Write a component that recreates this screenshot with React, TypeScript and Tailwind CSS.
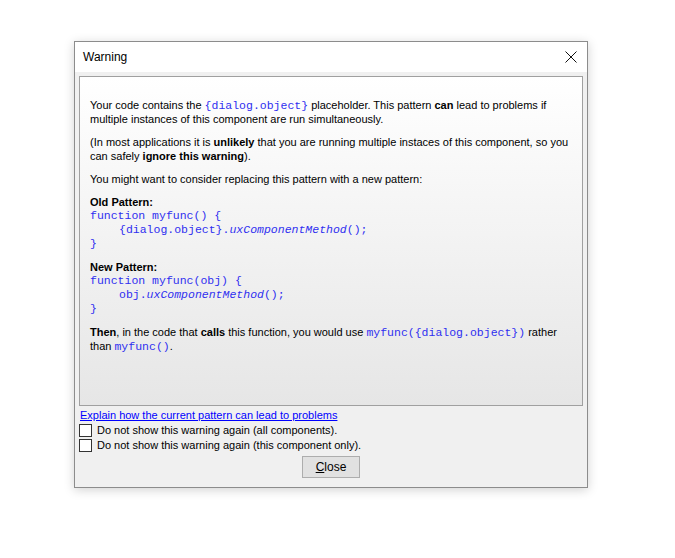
import React from "react";

const code = "text-[#2f2ff0] font-['Liberation_Mono',monospace] text-[11.5px]";
const icode = code + " leading-[10px]";

function Check({ label }: { label: string }) {
  return (
    <div className="flex items-center h-[15px]">
      <div className="w-[13px] h-[13px] border border-[#333] bg-white shrink-0" />
      <span className="ml-[5px] leading-[15px]">{label}</span>
    </div>
  );
}

export default function App() {
  return (
    <div className="w-[675px] h-[558px] bg-white pt-[41px] pl-[74px] font-['Liberation_Sans',Arial,sans-serif]">
      <div className="w-[514px] h-[447px] border border-[#8c8c8c] bg-[#f0f0f0] flex flex-col shadow-[0_2px_10px_rgba(0,0,0,0.18)]">
        <div className="h-[30px] bg-white flex items-center justify-between pl-[8px] pr-[10px] shrink-0">
          <span className="text-[12px] text-black">Warning</span>
          <svg width="12" height="12" viewBox="0 0 12 12">
            <path d="M0.5 0.5 L11.5 11.5 M11.5 0.5 L0.5 11.5" stroke="#111" strokeWidth="1" fill="none" />
          </svg>
        </div>
        <div className="flex-1 flex flex-col px-[4px] pt-[4px] text-[11px] text-black">
          <div className="h-[330px] border border-[#a0a0a0] bg-gradient-to-b from-white to-[#e6e6e6] pl-[10px] pt-[21px] leading-[14px] flex flex-col gap-[9px]">
            <p>
              Your code contains the <span className={icode}>{"{dialog.object}"}</span> placeholder. This pattern <b>can</b> lead to problems if
              <br />
              multiple instances of this component are run simultaneously.
            </p>
            <p>
              (In most applications it is <b>unlikely</b> that you are running multiple instaces of this component, so you
              <br />
              can safely <b>ignore this warning</b>).
            </p>
            <p>You might want to consider replacing this pattern with a new pattern:</p>
            <div>
              <b>Old Pattern:</b>
              <div className={code}>function myfunc() {"{"}</div>
              <div className={code + " pl-[29px]"}>
                {"{dialog.object}."}
                <i>uxComponentMethod</i>();
              </div>
              <div className={code}>{"}"}</div>
            </div>
            <div>
              <b>New Pattern:</b>
              <div className={code}>function myfunc(obj) {"{"}</div>
              <div className={code + " pl-[29px]"}>
                obj.<i>uxComponentMethod</i>();
              </div>
              <div className={code}>{"}"}</div>
            </div>
            <p>
              <b>Then</b>, in the code that <b>calls</b> this function, you would use{" "}
              <span className={icode}>{"myfunc({dialog.object})"}</span> rather
              <br />
              than <span className={icode}>myfunc()</span>.
            </p>
          </div>
          <a className="mt-[1px] ml-[1px] text-[11px] leading-[16px] text-[#0000ff] underline self-start">
            Explain how the current pattern can lead to problems
          </a>
          <div className="text-[11px]">
            <Check label="Do not show this warning again (all components)." />
            <Check label="Do not show this warning again (this component only)." />
          </div>
          <div className="flex justify-center mt-[3px]">
            <button className="w-[58px] h-[22px] bg-[#e1e1e1] border border-[#adadad] text-[12px] leading-[20px]">
              <span className="underline">C</span>lose
            </button>
          </div>
        </div>
      </div>
    </div>
  );
}
